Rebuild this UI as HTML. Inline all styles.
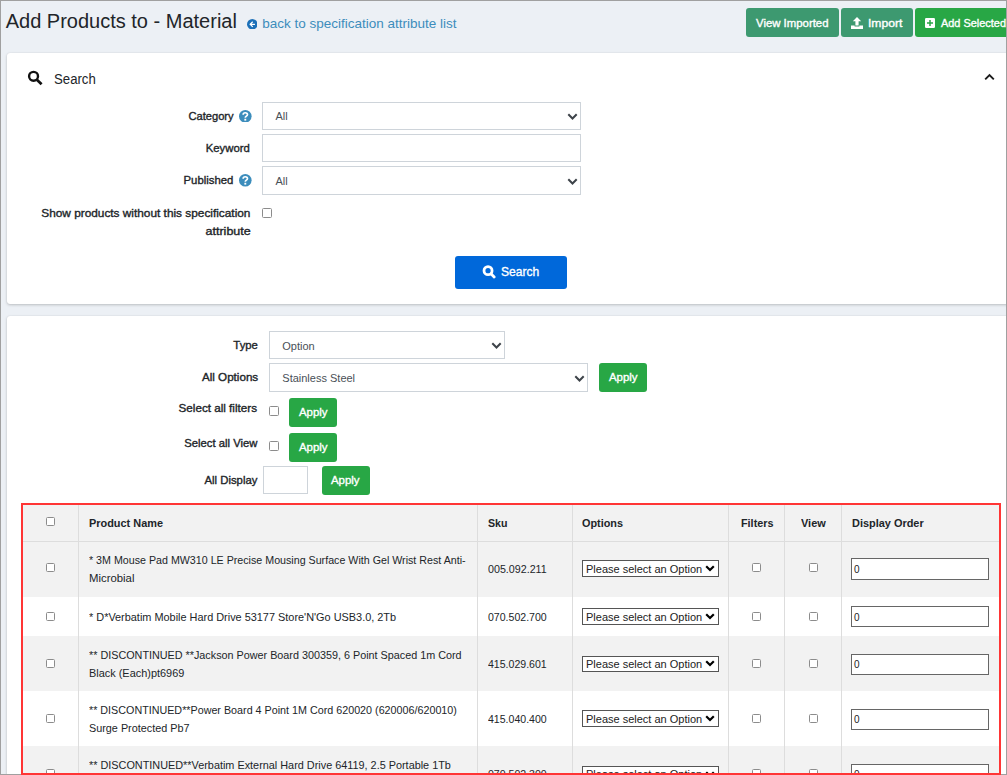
<!DOCTYPE html>
<html><head><meta charset="utf-8"><style>
html,body{margin:0;padding:0;}
html,body{width:1007px;height:775px;overflow:hidden;}
body{background:#ecf0f5;font-family:"Liberation Sans", sans-serif;}
#wrap{position:relative;width:1007px;height:775px;overflow:hidden;background:#ecf0f5;}
</style></head><body><div id="wrap">
<svg style="position:absolute;left:246.7px;top:18.8px" width="10.6" height="10.6" viewBox="0 0 20 20"><circle cx="10" cy="10" r="10" fill="#1c70b8"/><path d="M10.8 5.2 L6 10 L10.8 14.8 M6.5 10 H15" fill="none" stroke="#fff" stroke-width="2.3"/></svg>
<div style="position:absolute;left:746px;top:8.3px;width:92.70000000000005px;height:28.3px;background:#3d9970;border-radius:3px;"></div>
<div style="position:absolute;left:841px;top:8.3px;width:71.70000000000005px;height:28.3px;background:#3d9970;border-radius:3px;"></div>
<div style="position:absolute;left:915px;top:8.3px;width:105px;height:28.3px;background:#28a745;border-radius:3px;"></div>
<svg style="position:absolute;left:851px;top:16.9px" width="12" height="12" viewBox="0 0 12 12"><path d="M6 0 L10.2 4.3 L7.6 4.3 L7.6 8.4 L4.4 8.4 L4.4 4.3 L1.8 4.3 Z" fill="#fff"/><path d="M0 8.6 H3.6 V9.6 H8.4 V8.6 H12 V12 H0 Z" fill="#fff"/></svg>
<svg style="position:absolute;left:925px;top:17.9px" width="10" height="10" viewBox="0 0 10 10"><rect x="0" y="0" width="10" height="10" rx="1.2" fill="#fff"/><path d="M5 2 V8 M2 5 H8" stroke="#28a745" stroke-width="1.5"/></svg>
<div style="position:absolute;left:7px;top:53px;width:1023px;height:250.5px;background:#fff;border-radius:3px;box-shadow:0 0 1px rgba(0,0,0,.125),0 1px 3px rgba(0,0,0,.2);"></div>
<svg style="position:absolute;left:27px;top:70px" width="16" height="16" viewBox="0 0 16 16"><circle cx="6.55" cy="6.3" r="4.45" fill="none" stroke="#111" stroke-width="2.4"/><path d="M9.9 9.7 L14.6 14.3" stroke="#111" stroke-width="2.7"/></svg>
<svg style="position:absolute;left:983.8px;top:73.2px" width="11" height="7.5" viewBox="0 0 11 7.5"><path d="M1.2 6.3 L5.5 2 L9.8 6.3" fill="none" stroke="#1a1a1a" stroke-width="1.9"/></svg>
<svg style="position:absolute;left:239.29999999999998px;top:109.7px" width="12.6" height="12.6" viewBox="0 0 20 20"><circle cx="10" cy="10" r="10" fill="#3c8dbc"/><path d="M6.6 7.4 C6.6 3.4 13.5 3.4 13.5 7.2 C13.5 9.8 10 9.8 10 12.4" fill="none" stroke="#fff" stroke-width="2.7"/><rect x="8.5" y="13.9" width="3" height="3" fill="#fff"/></svg>
<div style="position:absolute;left:262.2px;top:102px;width:318.8px;height:27.599999999999994px;background:#fff;border:1px solid #ced4da;box-sizing:border-box;"></div>
<svg style="position:absolute;left:566.6px;top:112.89999999999999px" width="11" height="8" viewBox="0 0 11 8"><path d="M1.3 1.3 L5.5 5.5 L9.7 1.3" fill="none" stroke="#3d4349" stroke-width="2"/></svg>
<div style="position:absolute;left:262.2px;top:134.4px;width:318.8px;height:27.400000000000006px;background:#fff;border:1px solid #ced4da;box-sizing:border-box;"></div>
<svg style="position:absolute;left:239.29999999999998px;top:174.0px" width="12.6" height="12.6" viewBox="0 0 20 20"><circle cx="10" cy="10" r="10" fill="#3c8dbc"/><path d="M6.6 7.4 C6.6 3.4 13.5 3.4 13.5 7.2 C13.5 9.8 10 9.8 10 12.4" fill="none" stroke="#fff" stroke-width="2.7"/><rect x="8.5" y="13.9" width="3" height="3" fill="#fff"/></svg>
<div style="position:absolute;left:262.2px;top:166.3px;width:318.8px;height:28.69999999999999px;background:#fff;border:1px solid #ced4da;box-sizing:border-box;"></div>
<svg style="position:absolute;left:566.6px;top:177.75px" width="11" height="8" viewBox="0 0 11 8"><path d="M1.3 1.3 L5.5 5.5 L9.7 1.3" fill="none" stroke="#3d4349" stroke-width="2"/></svg>
<div style="position:absolute;left:262px;top:208.4px;width:10px;height:10.0px;background:#fff;border:1px solid #8c8c8c;border-radius:1.5px;box-sizing:border-box;"></div>
<div style="position:absolute;left:455.1px;top:256.1px;width:111.69999999999993px;height:32.599999999999966px;background:#0068da;border-radius:3px;"></div>
<svg style="position:absolute;left:481.5px;top:264.5px" width="14" height="14" viewBox="0 0 16 16"><circle cx="6.9" cy="6.5" r="4.6" fill="none" stroke="#fff" stroke-width="3.2"/><path d="M10.3 9.9 L13.9 13.6" stroke="#fff" stroke-width="3.2" stroke-linecap="round"/></svg>
<div style="position:absolute;left:7px;top:315.5px;width:1023px;height:484.5px;background:#fff;border-radius:3px;box-shadow:0 0 1px rgba(0,0,0,.125),0 1px 3px rgba(0,0,0,.2);"></div>
<div style="position:absolute;left:269px;top:331px;width:235.7px;height:28px;background:#fff;border:1px solid #ced4da;box-sizing:border-box;"></div>
<svg style="position:absolute;left:490.6px;top:342.1px" width="11" height="8" viewBox="0 0 11 8"><path d="M1.3 1.3 L5.5 5.5 L9.7 1.3" fill="none" stroke="#3d4349" stroke-width="2"/></svg>
<div style="position:absolute;left:269px;top:363.3px;width:318.79999999999995px;height:28.69999999999999px;background:#fff;border:1px solid #ced4da;box-sizing:border-box;"></div>
<svg style="position:absolute;left:573.6px;top:374.75px" width="11" height="8" viewBox="0 0 11 8"><path d="M1.3 1.3 L5.5 5.5 L9.7 1.3" fill="none" stroke="#3d4349" stroke-width="2"/></svg>
<div style="position:absolute;left:599.2px;top:363px;width:47.59999999999991px;height:29px;background:#28a745;border-radius:3px;"></div>
<div style="position:absolute;left:269px;top:406.3px;width:10px;height:10.0px;background:#fff;border:1px solid #8c8c8c;border-radius:1.5px;box-sizing:border-box;"></div>
<div style="position:absolute;left:289.2px;top:398.2px;width:47.60000000000002px;height:28.5px;background:#28a745;border-radius:3px;"></div>
<div style="position:absolute;left:269px;top:440.7px;width:10px;height:10.0px;background:#fff;border:1px solid #8c8c8c;border-radius:1.5px;box-sizing:border-box;"></div>
<div style="position:absolute;left:289.2px;top:433.2px;width:47.60000000000002px;height:28.400000000000034px;background:#28a745;border-radius:3px;"></div>
<div style="position:absolute;left:263.2px;top:466.1px;width:44.400000000000034px;height:27.5px;background:#fff;border:1px solid #ced4da;box-sizing:border-box;"></div>
<div style="position:absolute;left:322.2px;top:466.1px;width:47.60000000000002px;height:28.799999999999955px;background:#28a745;border-radius:3px;"></div>
<div style="position:absolute;left:23px;top:505px;width:976px;height:36px;background:#f2f2f2;"></div>
<div style="position:absolute;left:23px;top:541px;width:976px;height:56px;background:#f2f2f2;"></div>
<div style="position:absolute;left:23px;top:597px;width:976px;height:39px;background:#fff;"></div>
<div style="position:absolute;left:23px;top:636px;width:976px;height:55px;background:#f2f2f2;"></div>
<div style="position:absolute;left:23px;top:691px;width:976px;height:55px;background:#fff;"></div>
<div style="position:absolute;left:23px;top:746px;width:976px;height:54px;background:#f2f2f2;"></div>
<div style="position:absolute;left:23px;top:541px;width:976px;height:1px;background:#dddddd;"></div>
<div style="position:absolute;left:77.6px;top:505px;width:1.0px;height:295px;background:#dddddd;"></div>
<div style="position:absolute;left:476.9px;top:505px;width:1.0px;height:295px;background:#dddddd;"></div>
<div style="position:absolute;left:572.1px;top:505px;width:1.0px;height:295px;background:#dddddd;"></div>
<div style="position:absolute;left:727.9px;top:505px;width:1.0px;height:295px;background:#dddddd;"></div>
<div style="position:absolute;left:784.0px;top:505px;width:1.0px;height:295px;background:#dddddd;"></div>
<div style="position:absolute;left:840.9px;top:505px;width:1.0px;height:295px;background:#dddddd;"></div>
<div style="position:absolute;left:46px;top:517px;width:9px;height:9px;background:#fff;border:1px solid #8c8c8c;border-radius:1.5px;box-sizing:border-box;"></div>
<div style="position:absolute;left:46px;top:563px;width:9px;height:9px;background:#fff;border:1px solid #8c8c8c;border-radius:1.5px;box-sizing:border-box;"></div>
<div style="position:absolute;left:582.1px;top:560px;width:136.69999999999993px;height:17px;background:#fff;border:1px solid #555;box-sizing:border-box;"></div>
<svg style="position:absolute;left:705px;top:565.0px" width="10" height="7" viewBox="0 0 10 7"><path d="M1.2 1.2 L5 5 L8.8 1.2" fill="none" stroke="#000" stroke-width="2.2"/></svg>
<div style="position:absolute;left:752px;top:562.5px;width:9px;height:9.0px;background:#fff;border:1px solid #8c8c8c;border-radius:1.5px;box-sizing:border-box;"></div>
<div style="position:absolute;left:809px;top:562.5px;width:9px;height:9.0px;background:#fff;border:1px solid #8c8c8c;border-radius:1.5px;box-sizing:border-box;"></div>
<div style="position:absolute;left:851.1px;top:558px;width:137.79999999999995px;height:21.5px;background:#fff;border:1px solid #666;box-sizing:border-box;"></div>
<div style="position:absolute;left:46px;top:612px;width:9px;height:9px;background:#fff;border:1px solid #8c8c8c;border-radius:1.5px;box-sizing:border-box;"></div>
<div style="position:absolute;left:582.1px;top:608px;width:136.69999999999993px;height:17px;background:#fff;border:1px solid #555;box-sizing:border-box;"></div>
<svg style="position:absolute;left:705px;top:613.0px" width="10" height="7" viewBox="0 0 10 7"><path d="M1.2 1.2 L5 5 L8.8 1.2" fill="none" stroke="#000" stroke-width="2.2"/></svg>
<div style="position:absolute;left:752px;top:611.5px;width:9px;height:9.0px;background:#fff;border:1px solid #8c8c8c;border-radius:1.5px;box-sizing:border-box;"></div>
<div style="position:absolute;left:809px;top:611.5px;width:9px;height:9.0px;background:#fff;border:1px solid #8c8c8c;border-radius:1.5px;box-sizing:border-box;"></div>
<div style="position:absolute;left:851.1px;top:606.2px;width:137.79999999999995px;height:20.399999999999977px;background:#fff;border:1px solid #666;box-sizing:border-box;"></div>
<div style="position:absolute;left:46px;top:659px;width:9px;height:9px;background:#fff;border:1px solid #8c8c8c;border-radius:1.5px;box-sizing:border-box;"></div>
<div style="position:absolute;left:582.1px;top:655.5px;width:136.69999999999993px;height:16.5px;background:#fff;border:1px solid #555;box-sizing:border-box;"></div>
<svg style="position:absolute;left:705px;top:660.25px" width="10" height="7" viewBox="0 0 10 7"><path d="M1.2 1.2 L5 5 L8.8 1.2" fill="none" stroke="#000" stroke-width="2.2"/></svg>
<div style="position:absolute;left:752px;top:658.5px;width:9px;height:9.0px;background:#fff;border:1px solid #8c8c8c;border-radius:1.5px;box-sizing:border-box;"></div>
<div style="position:absolute;left:809px;top:658.5px;width:9px;height:9.0px;background:#fff;border:1px solid #8c8c8c;border-radius:1.5px;box-sizing:border-box;"></div>
<div style="position:absolute;left:851.1px;top:654px;width:137.79999999999995px;height:20.5px;background:#fff;border:1px solid #666;box-sizing:border-box;"></div>
<div style="position:absolute;left:46px;top:714px;width:9px;height:9px;background:#fff;border:1px solid #8c8c8c;border-radius:1.5px;box-sizing:border-box;"></div>
<div style="position:absolute;left:582.1px;top:710px;width:136.69999999999993px;height:17px;background:#fff;border:1px solid #555;box-sizing:border-box;"></div>
<svg style="position:absolute;left:705px;top:715.0px" width="10" height="7" viewBox="0 0 10 7"><path d="M1.2 1.2 L5 5 L8.8 1.2" fill="none" stroke="#000" stroke-width="2.2"/></svg>
<div style="position:absolute;left:752px;top:713.5px;width:9px;height:9.0px;background:#fff;border:1px solid #8c8c8c;border-radius:1.5px;box-sizing:border-box;"></div>
<div style="position:absolute;left:809px;top:713.5px;width:9px;height:9.0px;background:#fff;border:1px solid #8c8c8c;border-radius:1.5px;box-sizing:border-box;"></div>
<div style="position:absolute;left:851.1px;top:709px;width:137.79999999999995px;height:20.799999999999955px;background:#fff;border:1px solid #666;box-sizing:border-box;"></div>
<div style="position:absolute;left:46px;top:769px;width:9px;height:9px;background:#fff;border:1px solid #8c8c8c;border-radius:1.5px;box-sizing:border-box;"></div>
<div style="position:absolute;left:582.1px;top:766px;width:136.69999999999993px;height:17px;background:#fff;border:1px solid #555;box-sizing:border-box;"></div>
<svg style="position:absolute;left:705px;top:771.0px" width="10" height="7" viewBox="0 0 10 7"><path d="M1.2 1.2 L5 5 L8.8 1.2" fill="none" stroke="#000" stroke-width="2.2"/></svg>
<div style="position:absolute;left:752px;top:768.5px;width:9px;height:9.0px;background:#fff;border:1px solid #8c8c8c;border-radius:1.5px;box-sizing:border-box;"></div>
<div style="position:absolute;left:809px;top:768.5px;width:9px;height:9.0px;background:#fff;border:1px solid #8c8c8c;border-radius:1.5px;box-sizing:border-box;"></div>
<div style="position:absolute;left:851.1px;top:764.4px;width:137.79999999999995px;height:21.600000000000023px;background:#fff;border:1px solid #666;box-sizing:border-box;"></div>
<div style="position:absolute;left:5.70px;top:9.00px;font-size:20px;line-height:24.0px;font-weight:400;color:#212529;white-space:pre;">Add Products to - Material</div>
<div style="position:absolute;left:262.20px;top:16.00px;font-size:13.5px;line-height:16.2px;font-weight:400;color:#3c8dbc;white-space:pre;">back to specification attribute list</div>
<div style="position:absolute;left:756.00px;top:17.00px;font-size:11px;line-height:13.2px;font-weight:400;color:#fff;white-space:pre;transform:scaleX(1.0341);transform-origin:left center;-webkit-text-stroke:0.35px #fff;">View Imported</div>
<div style="position:absolute;left:867.90px;top:17.00px;font-size:11px;line-height:13.2px;font-weight:400;color:#fff;white-space:pre;transform:scaleX(1.1030);transform-origin:left center;-webkit-text-stroke:0.35px #fff;">Import</div>
<div style="position:absolute;left:940.60px;top:17.00px;font-size:11px;line-height:13.2px;font-weight:400;color:#fff;white-space:pre;transform:scaleX(0.9933);transform-origin:left center;-webkit-text-stroke:0.35px #fff;">Add Selected</div>
<div style="position:absolute;left:54.00px;top:71.00px;font-size:14px;line-height:16.8px;font-weight:400;color:#212529;white-space:pre;transform:scaleX(0.9423);transform-origin:left center;">Search</div>
<div style="position:absolute;left:189.06px;top:110.00px;font-size:11px;line-height:13.2px;font-weight:400;color:#212529;white-space:pre;transform:scaleX(1.0125);transform-origin:right center;-webkit-text-stroke:0.35px #212529;">Category</div>
<div style="position:absolute;left:275.40px;top:110.00px;font-size:11px;line-height:13.2px;font-weight:400;color:#495057;white-space:pre;">All</div>
<div style="position:absolute;left:207.20px;top:142.00px;font-size:11px;line-height:13.2px;font-weight:400;color:#212529;white-space:pre;transform:scaleX(1.0304);transform-origin:right center;-webkit-text-stroke:0.35px #212529;">Keyword</div>
<div style="position:absolute;left:185.17px;top:174.00px;font-size:11px;line-height:13.2px;font-weight:400;color:#212529;white-space:pre;transform:scaleX(1.0305);transform-origin:right center;-webkit-text-stroke:0.35px #212529;">Published</div>
<div style="position:absolute;left:275.40px;top:175.00px;font-size:11px;line-height:13.2px;font-weight:400;color:#495057;white-space:pre;">All</div>
<div style="position:absolute;left:56.36px;top:207.00px;font-size:11px;line-height:13.2px;font-weight:400;color:#212529;white-space:pre;transform:scaleX(1.0759);transform-origin:right center;-webkit-text-stroke:0.35px #212529;">Show products without this specification</div>
<div style="position:absolute;left:211.05px;top:225.00px;font-size:11px;line-height:13.2px;font-weight:400;color:#212529;white-space:pre;transform:scaleX(1.1371);transform-origin:right center;-webkit-text-stroke:0.35px #212529;">attribute</div>
<div style="position:absolute;left:501.00px;top:264.00px;font-size:13px;line-height:15.6px;font-weight:400;color:#fff;white-space:pre;transform:scaleX(0.9295);transform-origin:left center;-webkit-text-stroke:0.35px #fff;">Search</div>
<div style="position:absolute;left:233.94px;top:339.00px;font-size:11px;line-height:13.2px;font-weight:400;color:#212529;white-space:pre;transform:scaleX(1.0269);transform-origin:right center;-webkit-text-stroke:0.35px #212529;">Type</div>
<div style="position:absolute;left:282.30px;top:340.00px;font-size:11px;line-height:13.2px;font-weight:400;color:#495057;white-space:pre;">Option</div>
<div style="position:absolute;left:204.60px;top:371.00px;font-size:11px;line-height:13.2px;font-weight:400;color:#212529;white-space:pre;transform:scaleX(1.0582);transform-origin:right center;-webkit-text-stroke:0.35px #212529;">All Options</div>
<div style="position:absolute;left:282.30px;top:372.00px;font-size:11px;line-height:13.2px;font-weight:400;color:#495057;white-space:pre;">Stainless Steel</div>
<div style="position:absolute;left:609.00px;top:371.00px;font-size:11px;line-height:13.2px;font-weight:400;color:#fff;white-space:pre;transform:scaleX(1.0388);transform-origin:left center;-webkit-text-stroke:0.35px #fff;">Apply</div>
<div style="position:absolute;left:183.22px;top:402.00px;font-size:11px;line-height:13.2px;font-weight:400;color:#212529;white-space:pre;transform:scaleX(1.0597);transform-origin:right center;-webkit-text-stroke:0.35px #212529;">Select all filters</div>
<div style="position:absolute;left:298.80px;top:406.00px;font-size:11px;line-height:13.2px;font-weight:400;color:#fff;white-space:pre;transform:scaleX(1.0388);transform-origin:left center;-webkit-text-stroke:0.35px #fff;">Apply</div>
<div style="position:absolute;left:185.86px;top:437.00px;font-size:11px;line-height:13.2px;font-weight:400;color:#212529;white-space:pre;transform:scaleX(1.0232);transform-origin:right center;-webkit-text-stroke:0.35px #212529;">Select all View</div>
<div style="position:absolute;left:298.80px;top:441.00px;font-size:11px;line-height:13.2px;font-weight:400;color:#fff;white-space:pre;transform:scaleX(1.0388);transform-origin:left center;-webkit-text-stroke:0.35px #fff;">Apply</div>
<div style="position:absolute;left:205.84px;top:474.00px;font-size:11px;line-height:13.2px;font-weight:400;color:#212529;white-space:pre;transform:scaleX(1.0280);transform-origin:right center;-webkit-text-stroke:0.35px #212529;">All Display</div>
<div style="position:absolute;left:331.40px;top:474.00px;font-size:11px;line-height:13.2px;font-weight:400;color:#fff;white-space:pre;transform:scaleX(1.0388);transform-origin:left center;-webkit-text-stroke:0.35px #fff;">Apply</div>
<div style="position:absolute;left:89.00px;top:517.00px;font-size:11px;line-height:13.2px;font-weight:700;color:#212529;white-space:pre;transform:scaleX(0.9922);transform-origin:left center;">Product Name</div>
<div style="position:absolute;left:487.80px;top:517.00px;font-size:11px;line-height:13.2px;font-weight:700;color:#212529;white-space:pre;transform:scaleX(0.9659);transform-origin:left center;">Sku</div>
<div style="position:absolute;left:582.00px;top:517.00px;font-size:11px;line-height:13.2px;font-weight:700;color:#212529;white-space:pre;transform:scaleX(0.9865);transform-origin:left center;">Options</div>
<div style="position:absolute;left:740.50px;top:517.00px;font-size:11px;line-height:13.2px;font-weight:700;color:#212529;white-space:pre;transform:scaleX(0.9844);transform-origin:left center;">Filters</div>
<div style="position:absolute;left:801.00px;top:517.00px;font-size:11px;line-height:13.2px;font-weight:700;color:#212529;white-space:pre;transform:scaleX(0.9970);transform-origin:left center;">View</div>
<div style="position:absolute;left:851.70px;top:517.00px;font-size:11px;line-height:13.2px;font-weight:700;color:#212529;white-space:pre;transform:scaleX(0.9939);transform-origin:left center;">Display Order</div>
<div style="position:absolute;left:88.70px;top:554.00px;font-size:11px;line-height:13.2px;font-weight:400;color:#212529;white-space:pre;transform:scaleX(0.9706);transform-origin:left center;">* 3M Mouse Pad MW310 LE Precise Mousing Surface With Gel Wrist Rest Anti-</div>
<div style="position:absolute;left:88.70px;top:572.00px;font-size:11px;line-height:13.2px;font-weight:400;color:#212529;white-space:pre;transform:scaleX(1.0315);transform-origin:left center;">Microbial</div>
<div style="position:absolute;left:487.60px;top:563.00px;font-size:11px;line-height:13.2px;font-weight:400;color:#212529;white-space:pre;transform:scaleX(0.9725);transform-origin:left center;">005.092.211</div>
<div style="position:absolute;left:586.00px;top:563.00px;font-size:11px;line-height:13.2px;font-weight:400;color:#222;white-space:pre;">Please select an Option</div>
<div style="position:absolute;left:854.00px;top:564.00px;font-size:10px;line-height:12.0px;font-weight:400;color:#222;white-space:pre;">0</div>
<div style="position:absolute;left:88.70px;top:611.00px;font-size:11px;line-height:13.2px;font-weight:400;color:#212529;white-space:pre;transform:scaleX(0.9909);transform-origin:left center;">* D*Verbatim Mobile Hard Drive 53177 Store'N'Go USB3.0, 2Tb</div>
<div style="position:absolute;left:487.60px;top:611.00px;font-size:11px;line-height:13.2px;font-weight:400;color:#212529;white-space:pre;transform:scaleX(0.9596);transform-origin:left center;">070.502.700</div>
<div style="position:absolute;left:586.00px;top:611.00px;font-size:11px;line-height:13.2px;font-weight:400;color:#222;white-space:pre;">Please select an Option</div>
<div style="position:absolute;left:854.00px;top:612.00px;font-size:10px;line-height:12.0px;font-weight:400;color:#222;white-space:pre;">0</div>
<div style="position:absolute;left:88.70px;top:649.00px;font-size:11px;line-height:13.2px;font-weight:400;color:#212529;white-space:pre;transform:scaleX(0.9813);transform-origin:left center;">** DISCONTINUED **Jackson Power Board 300359, 6 Point Spaced 1m Cord</div>
<div style="position:absolute;left:88.70px;top:667.00px;font-size:11px;line-height:13.2px;font-weight:400;color:#212529;white-space:pre;transform:scaleX(0.9927);transform-origin:left center;">Black (Each)pt6969</div>
<div style="position:absolute;left:487.60px;top:658.00px;font-size:11px;line-height:13.2px;font-weight:400;color:#212529;white-space:pre;transform:scaleX(0.9596);transform-origin:left center;">415.029.601</div>
<div style="position:absolute;left:586.00px;top:658.00px;font-size:11px;line-height:13.2px;font-weight:400;color:#222;white-space:pre;">Please select an Option</div>
<div style="position:absolute;left:854.00px;top:659.00px;font-size:10px;line-height:12.0px;font-weight:400;color:#222;white-space:pre;">0</div>
<div style="position:absolute;left:88.70px;top:704.00px;font-size:11px;line-height:13.2px;font-weight:400;color:#212529;white-space:pre;transform:scaleX(0.9768);transform-origin:left center;">** DISCONTINUED**Power Board 4 Point 1M Cord 620020 (620006/620010)</div>
<div style="position:absolute;left:88.70px;top:722.00px;font-size:11px;line-height:13.2px;font-weight:400;color:#212529;white-space:pre;transform:scaleX(0.9841);transform-origin:left center;">Surge Protected Pb7</div>
<div style="position:absolute;left:487.60px;top:713.00px;font-size:11px;line-height:13.2px;font-weight:400;color:#212529;white-space:pre;transform:scaleX(0.9596);transform-origin:left center;">415.040.400</div>
<div style="position:absolute;left:586.00px;top:713.00px;font-size:11px;line-height:13.2px;font-weight:400;color:#222;white-space:pre;">Please select an Option</div>
<div style="position:absolute;left:854.00px;top:714.00px;font-size:10px;line-height:12.0px;font-weight:400;color:#222;white-space:pre;">0</div>
<div style="position:absolute;left:88.70px;top:759.00px;font-size:11px;line-height:13.2px;font-weight:400;color:#212529;white-space:pre;transform:scaleX(0.9871);transform-origin:left center;">** DISCONTINUED**Verbatim External Hard Drive 64119, 2.5 Portable 1Tb</div>
<div style="position:absolute;left:88.70px;top:777.00px;font-size:11px;line-height:13.2px;font-weight:400;color:#212529;white-space:pre;transform:scaleX(0.9764);transform-origin:left center;">USB 3.0</div>
<div style="position:absolute;left:487.60px;top:768.00px;font-size:11px;line-height:13.2px;font-weight:400;color:#212529;white-space:pre;transform:scaleX(0.9596);transform-origin:left center;">070.502.300</div>
<div style="position:absolute;left:586.00px;top:768.00px;font-size:11px;line-height:13.2px;font-weight:400;color:#222;white-space:pre;">Please select an Option</div>
<div style="position:absolute;left:854.00px;top:769.00px;font-size:10px;line-height:12.0px;font-weight:400;color:#222;white-space:pre;">0</div>
<div style="position:absolute;left:0px;top:0px;width:1007px;height:775px;border:1px solid #a0a0a0;box-sizing:border-box;"></div>
<div style="position:absolute;left:21px;top:503px;width:980px;height:272px;border:2px solid #ff3535;box-sizing:border-box;"></div>
</div></body></html>
